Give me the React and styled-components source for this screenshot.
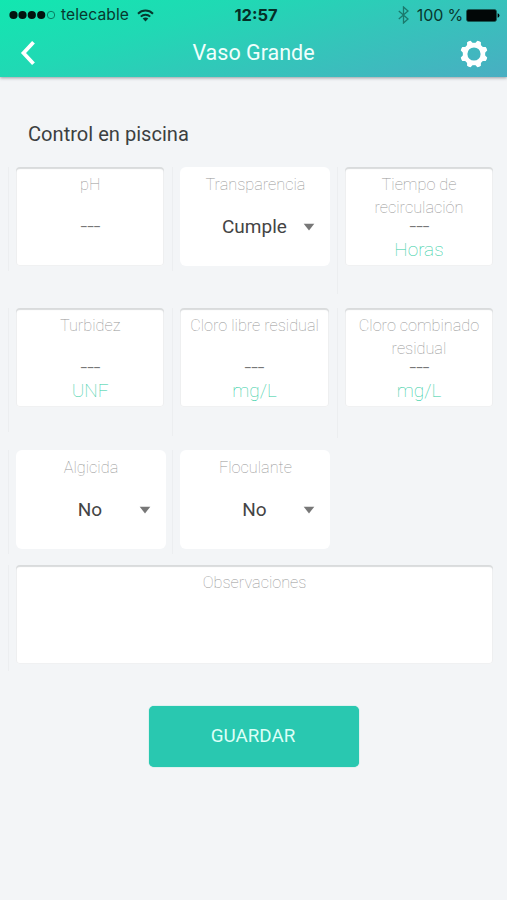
import React from "react";
import styled, { createGlobalStyle } from "styled-components";

const GlobalStyle = createGlobalStyle`
  * { box-sizing: border-box; }
  body {
    margin: 0;
    background: #f3f5f7;
    font-family: Roboto, "Liberation Sans", sans-serif;
  }
`;

const Screen = styled.div`
  display: flex;
  flex-direction: column;
  width: 507px;
  height: 900px;
  overflow: hidden;
  background: #f3f5f7;
`;

const Header = styled.header`
  height: 77px;
  flex: none;
  background: linear-gradient(163deg, #12e7b0 0%, #20d9b4 32%, #34c5ba 62%, #49aec2 100%);
  box-shadow: 0 1px 3px rgba(60, 70, 80, 0.5);
`;

const StatusBar = styled.div`
  display: grid;
  grid-template-columns: 1fr auto 1fr;
  align-items: center;
  height: 30px;
  padding: 0 7px 0 9px;
  font-family: Inter, sans-serif;
  font-size: 16px;
  line-height: 20px;
  color: #07382e;
`;

const StatusGroup = styled.div`
  display: flex;
  align-items: center;
  justify-content: ${(p) => (p.$end ? "flex-end" : "flex-start")};
  white-space: nowrap;
`;

const Carrier = styled.span`
  margin: 0 8px 0 5px;
  font-size: 15.6px;
  letter-spacing: 0.1px;
`;

const Clock = styled.span`
  padding-left: 3px;
  color: #052f27;
  font-size: 16.5px;
  font-weight: 700;
`;

const BatteryText = styled.span`
  margin: 0 3px 0 8px;
  font-size: 16px;
  letter-spacing: -0.15px;
`;

const NavBar = styled.nav`
  display: grid;
  grid-template-columns: 60px 1fr 60px;
  align-items: center;
  height: 46px;
`;

const NavButton = styled.button`
  display: flex;
  justify-content: ${(p) => (p.$end ? "flex-end" : "flex-start")};
  padding: ${(p) => (p.$end ? "1px 19px 0 0" : "0 0 0 20px")};
  border: 0;
  background: none;
  color: #fff;
`;

const Title = styled.h1`
  margin: 0;
  text-align: center;
  color: #f0fffc;
  font-size: 21.5px;
  font-weight: 400;
  line-height: 26px;
`;

const Form = styled.main`
  display: flex;
  flex-direction: column;
  padding: 45px 6px 0 8px;
`;

const SectionTitle = styled.h2`
  margin: 0 0 20px 20px;
  color: #3c3f41;
  font-size: 20.1px;
  font-weight: 400;
  line-height: 25px;
`;

const Fields = styled.div`
  display: grid;
  grid-template-columns: repeat(3, 164.4px);
  grid-template-rows: 141px 142px 115px 107px;
`;

const Cell = styled.div`
  grid-column: ${(p) => (p.$wide ? "1 / -1" : "auto")};
  height: ${(p) => p.$line || 104}px;
  padding: 0 8px 0 7px;
  border-left: 1px solid #eceef0;
`;

const Card = styled.div`
  display: flex;
  flex-direction: column;
  align-items: center;
  width: ${(p) => (p.$select ? "150px" : "100%")};
  height: 99px;
  padding-top: 6px;
  border-radius: ${(p) => (p.$select ? 6 : 4)}px;
  background: #fff;
  box-shadow: ${(p) =>
    p.$select ? "none" : "inset 0 2px 1px #d9dbdc, inset 0 0 0 1px #f0f1f2"};
`;

const Label = styled.label`
  min-height: 46px;
  color: #969696;
  font-size: 16.3px;
  font-weight: 100;
  line-height: 23px;
  text-align: center;
  white-space: pre-line;
`;

const Value = styled.span`
  height: 12px;
  color: #777;
  font-size: 18px;
  font-weight: 400;
  line-height: 12px;
  transform: translateY(0.5px) scale(1.33, 0.85);
`;

const Unit = styled.span`
  margin-top: 7px;
  color: #30cda3;
  font-size: 19px;
  font-weight: 100;
  line-height: 24px;
`;

const Choice = styled.div`
  display: grid;
  grid-template-columns: 1fr auto 1fr;
  align-items: center;
  width: 100%;
  margin-top: -4px;
  padding-right: 2px;
  color: #444;
  font-size: 19px;
  line-height: 24px;
`;

const ChoiceText = styled.span`
  grid-column: 2;
`;

const Arrow = styled.svg`
  justify-self: end;
  margin-right: 13px;
`;

const SaveButton = styled.button`
  align-self: center;
  width: 210px;
  height: 61px;
  margin: 34px 2px 0 0;
  padding: 0 1px 1px 0;
  border: 0;
  border-radius: 5px;
  background: #29c8b0;
  color: #dcfff7;
  font-family: inherit;
  font-size: 18.8px;
  box-shadow: 0 0 1px #29c8b0;
`;

function SignalDots() {
  return (
    <svg width="47" height="10" viewBox="0 0 47 10">
      {[4.5, 13.5, 22.8, 32.2].map((x) => (
        <circle key={x} cx={x} cy="5" r="4.1" fill="#03130f" />
      ))}
      <circle cx="42" cy="5" r="3.7" fill="none" stroke="#087f62" strokeWidth="1" />
    </svg>
  );
}

function WifiIcon() {
  return (
    <svg width="17" height="13" viewBox="0 0 17 13" fill="none" stroke="#06372d" strokeWidth="2">
      <path d="M1 4.7C5.2.5 11.8.5 16 4.7" />
      <path d="M3.8 7.6C6.4 5 10.6 5 13.2 7.6" />
      <path d="M5.7 9.6C7.3 8.1 9.7 8.1 11.3 9.6L8.5 12.5Z" fill="#06372d" stroke="none" />
    </svg>
  );
}

function BluetoothIcon() {
  return (
    <svg width="11" height="18" viewBox="0 0 11 18" fill="none" stroke="#1b796c" strokeWidth="1.3">
      <path d="M.8 5 10 13 5.5 17V1L10 5 .8 13" />
    </svg>
  );
}

function BatteryIcon() {
  return (
    <svg width="34" height="13" viewBox="0 0 34 13">
      <rect x=".5" y=".5" width="30" height="12" rx="2" fill="#020707" stroke="#16564f" strokeWidth=".7" />
      <path d="M31.6 4.3Q33.5 4.5 33.5 6.5T31.6 8.7Z" fill="#020707" />
    </svg>
  );
}

function BackIcon() {
  return (
    <svg width="16" height="26" viewBox="0 0 16 26" fill="none">
      <path d="M13.5 2.2 3.5 13 13.5 23.8" stroke="currentColor" strokeWidth="3.8" />
    </svg>
  );
}

function GearIcon() {
  return (
    <svg width="28" height="28" viewBox="-14 -14 28 28">
      <circle r="8.9" fill="none" stroke="currentColor" strokeWidth="4.6" />
      {[22.5, 67.5, 112.5, 157.5, 202.5, 247.5, 292.5, 337.5].map((angle) => (
        <path
          key={angle}
          d="M-3.3-10-1.9-13.5Q0-14.1 1.9-13.5L3.3-10Z"
          fill="currentColor"
          transform={`rotate(${angle})`}
        />
      ))}
    </svg>
  );
}

const fields = [
  { label: "pH", value: "---" },
  { label: "Transparencia", choice: "Cumple" },
  { label: "Tiempo de\nrecirculación", value: "---", unit: "Horas", line: 127 },
  { label: "Turbidez", value: "---", unit: "UNF", line: 124 },
  { label: "Cloro libre residual", value: "---", unit: "mg/L", line: 128 },
  { label: "Cloro combinado\nresidual", value: "---", unit: "mg/L", line: 130 },
  { label: "Algicida", choice: "No" },
  { label: "Floculante", choice: "No" },
];

function Field({ label, value, unit, choice, line, wide }) {
  return (
    <Cell $line={line} $wide={wide}>
      <Card $select={Boolean(choice)}>
        <Label>{label}</Label>
        {value && <Value>{value}</Value>}
        {unit && <Unit>{unit}</Unit>}
        {choice && (
          <Choice>
            <ChoiceText>{choice}</ChoiceText>
            <Arrow width="12" height="8" viewBox="0 0 12 8">
              <path d="M.7.7H11.3L6 7.4Z" fill="#777" />
            </Arrow>
          </Choice>
        )}
      </Card>
    </Cell>
  );
}

export default function App() {
  return (
    <Screen>
      <GlobalStyle />
      <Header>
        <StatusBar>
          <StatusGroup>
            <SignalDots />
            <Carrier>telecable</Carrier>
            <WifiIcon />
          </StatusGroup>
          <Clock>12:57</Clock>
          <StatusGroup $end>
            <BluetoothIcon />
            <BatteryText>100 %</BatteryText>
            <BatteryIcon />
          </StatusGroup>
        </StatusBar>
        <NavBar>
          <NavButton aria-label="Volver"><BackIcon /></NavButton>
          <Title>Vaso Grande</Title>
          <NavButton $end aria-label="Ajustes"><GearIcon /></NavButton>
        </NavBar>
      </Header>
      <Form>
        <SectionTitle>Control en piscina</SectionTitle>
        <Fields>
          {fields.map((field) => (
            <Field key={field.label} {...field} />
          ))}
          <Field label="Observaciones" wide line={106} />
        </Fields>
        <SaveButton>GUARDAR</SaveButton>
      </Form>
    </Screen>
  );
}
